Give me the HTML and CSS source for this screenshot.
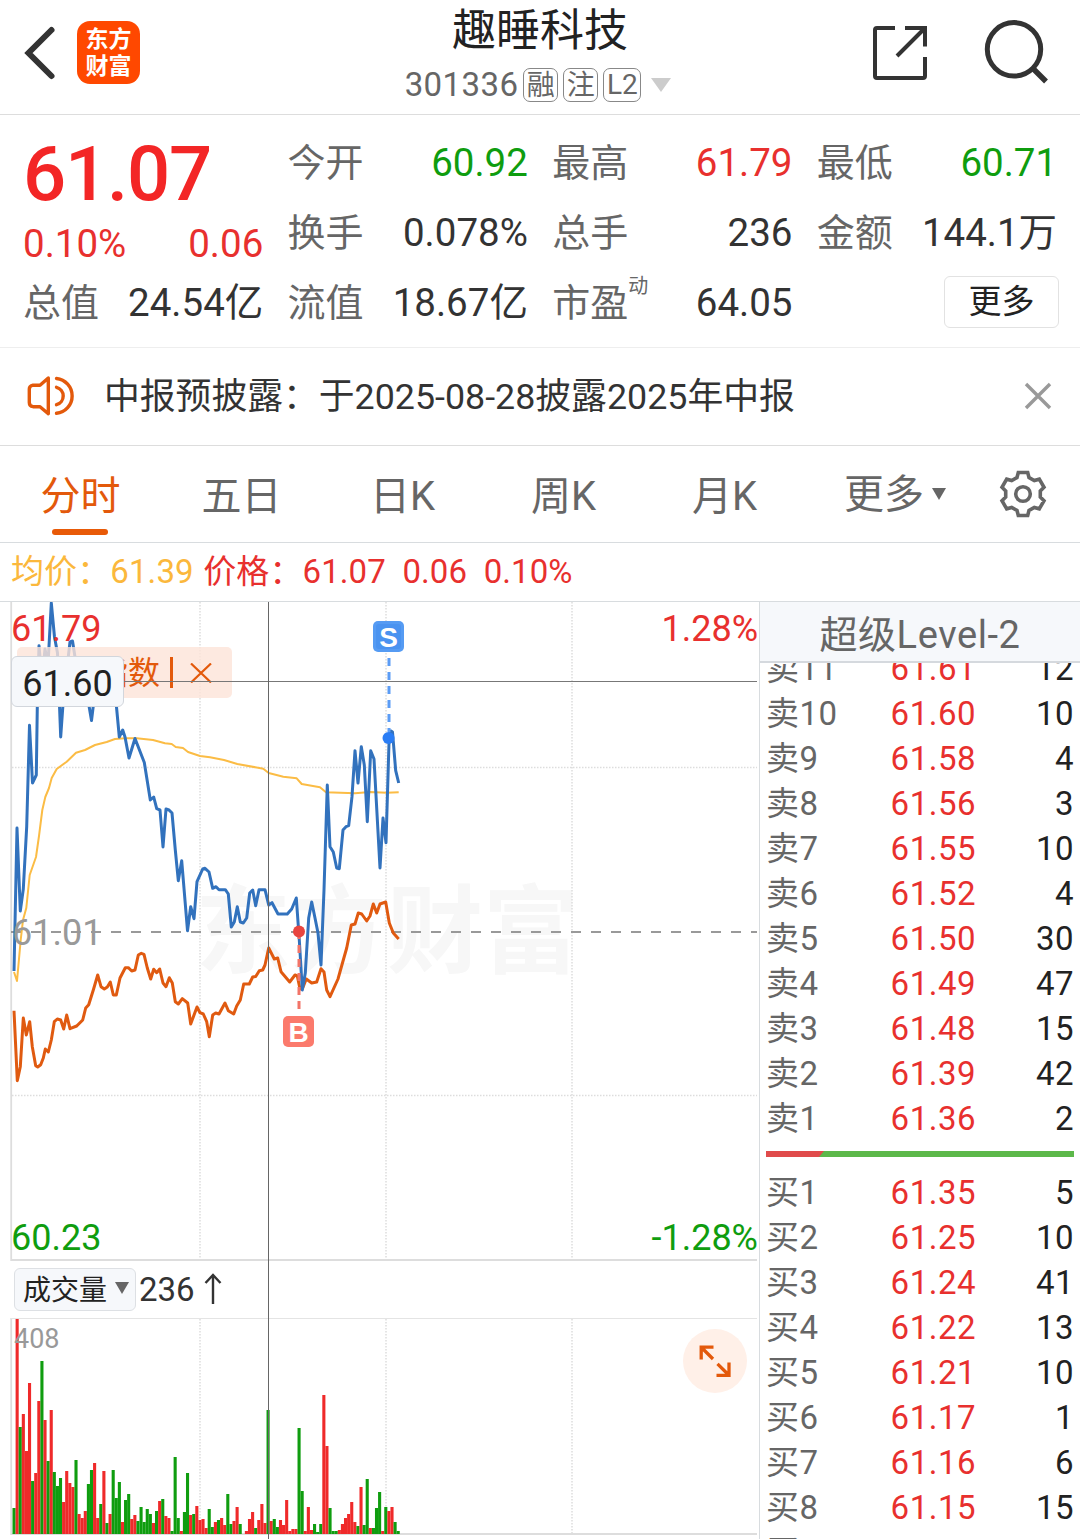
FILE: index.html
```html
<!DOCTYPE html>
<html lang="zh-CN">
<head>
    <meta charset="UTF-8">
    <meta name="viewport" content="width=device-width, initial-scale=1.0">
    <title>趣睡科技 301336</title>
    <link rel="stylesheet" href="styles.css">
</head>
<body>
    <!-- Header -->
    <header class="top-bar">
        <div class="top-left">
            <svg class="back-icon" width="36" height="56" viewBox="0 0 36 56">
                <path d="M31.5 5 L8.5 28 L31.5 51" fill="none" stroke="#333" stroke-width="6" stroke-linecap="round"/>
            </svg>
            <div class="app-logo"><span>东方</span><span>财富</span></div>
        </div>
        <div class="stock-title">
            <h1>趣睡科技</h1>
            <div class="stock-code">
                <span class="code">301336</span>
                <span class="tag">融</span>
                <span class="tag">注</span>
                <span class="tag tag-l2">L2</span>
                <svg class="code-arrow" width="20" height="14" viewBox="0 0 20 14"><path d="M0 0H20L10 14Z" fill="#ccc"/></svg>
            </div>
        </div>
        <div class="top-right">
            <svg width="56" height="56" viewBox="0 0 56 56" fill="none" stroke="#333" stroke-width="4">
                <path d="M23 3H5Q3 3 3 5V51Q3 53 5 53H51Q53 53 53 51V32"/>
                <path d="M33 3H53V21.5M52 4L25 31"/>
            </svg>
            <svg width="66" height="66" viewBox="0 0 66 66" fill="none" stroke="#333">
                <circle cx="31" cy="31.3" r="26.7" stroke-width="5"/>
                <path d="M50 50.5L63 63.5" stroke-width="5.5"/>
            </svg>
        </div>
    </header>

    <!-- Quote -->
    <section class="quote">
        <div class="price-col">
            <div class="price">61.07</div>
            <div class="change"><span>0.10%</span><span>0.06</span></div>
            <div class="stat"><label>总值</label><b>24.54亿</b></div>
        </div>
        <div class="stat-col">
            <div class="stat"><label>今开</label><b class="green">60.92</b></div>
            <div class="stat"><label>换手</label><b>0.078%</b></div>
            <div class="stat"><label>流值</label><b>18.67亿</b></div>
        </div>
        <div class="stat-col">
            <div class="stat"><label>最高</label><b class="red">61.79</b></div>
            <div class="stat"><label>总手</label><b>236</b></div>
            <div class="stat"><label>市盈<sup>动</sup></label><b>64.05</b></div>
        </div>
        <div class="stat-col">
            <div class="stat"><label>最低</label><b class="green">60.71</b></div>
            <div class="stat"><label>金额</label><b>144.1万</b></div>
            <div class="stat more-row"><button class="more-btn">更多</button></div>
        </div>
    </section>

    <!-- Notice -->
    <section class="notice">
        <svg width="50" height="42" viewBox="0 0 50 42" fill="none" stroke="#e3590b" stroke-width="3.4" stroke-linecap="round" stroke-linejoin="round">
            <path d="M22.3 3L14 10.2H7Q3.3 11 3.3 14V27.5Q3.3 31 7 31.7H14L22.3 38.7Z"/>
            <path d="M30.5 3.5A17.500 17.500 0 0 1 30.5 38.3M30.5 12.3A9 9 0 0 1 30.5 29.7"/>
        </svg>
        <p>中报预披露：于2025-08-28披露2025年中报</p>
        <svg class="close" width="28" height="28" viewBox="0 0 28 28"><path d="M2 2L26 26M26 2L2 26" stroke="#999" stroke-width="3.4"/></svg>
    </section>

    <!-- Tabs -->
    <nav class="tabs">
        <a class="tab active">分时</a>
        <a class="tab">五日</a>
        <a class="tab">日K</a>
        <a class="tab">周K</a>
        <a class="tab">月K</a>
        <a class="tab tab-more">更多<svg width="14" height="12" viewBox="0 0 14 12"><path d="M0 0H14L7 12Z" fill="#666"/></svg></a>
        <svg class="gear" width="50" height="50" viewBox="-25 -25 50 50" fill="none" stroke="#666" stroke-width="3.6">
            <path d="M-6 -16.5L-4.7 -21.5H4.7L6 -16.5L11.3 -13.4L16.3 -14.8L21 -6.7L17.3 -3V3L21 6.7L16.3 14.8L11.3 13.4L6 16.5L4.7 21.5H-4.7L-6 16.5L-11.3 13.4L-16.3 14.8L-21 6.7L-17.3 3V-3L-21 -6.7L-16.3 -14.8L-11.3 -13.4Z"/>
            <circle r="7.3"/>
        </svg>
    </nav>

    <div class="legend">
        <span class="avg">均价：61.39</span>
        <span>价格：61.07</span>
        <span class="diff">0.06</span>
        <span class="diff">0.10%</span>
    </div>

    <div class="main">
        <!-- Charts -->
        <div class="chart-pane">
            <svg class="price-chart" width="759" height="659" viewBox="0 602 759 659">
                <text class="watermark" x="195" y="965">东方财富</text>
                <g class="grid">
                    <path d="M200 602V1260M386 602V1260M572 602V1260M12 767.5H757M12 1095.5H757"/>
                </g>
                <path class="frame" d="M11.2 602V1260H757"/>
                <path class="mid-line" d="M11 932H757"/>
                <polyline class="line avg-line" points="14,972 17,981 20.7,940 23,920 26.3,908 29.7,875 36,857 39,836 42.3,810 45.3,797 49,788 51.7,778 56.7,769 66.7,761.7 76,752.7 85,750 95,745 106.7,742 115,739 125,738.3 136.7,738.3 153,740 165,743.3 171.7,744 175.7,747 183,748 188,752 200,756 210,757.3 224,760 237.3,764 263.3,768.7 268.7,773 283.3,776.7 296.7,778.3 301.7,784 320,787.3 326,792.3 355,793.3 370,792 386.7,792.7 398.7,792.3"/>
                <polyline class="line index-line" points="14,1010.7 17.3,1080.7 20.3,1066.7 23.3,1018 26.3,1035 29.7,1021.7 32.3,1046.7 35.7,1065.7 37.7,1067 40.7,1064.7 43.3,1058 45.3,1049 48.3,1052 51.3,1040 54.3,1021.7 57.3,1019 60.7,1020 63.7,1029 66.7,1015 70,1028.7 76.7,1026 82.7,1020 85.7,1008 88.7,1004.7 93.3,990 97.7,975 101,986.7 104.3,989 107.3,987 110.3,982 113.3,995 116.3,995 120,978 125.3,967.7 128.3,967.7 131.7,971 135,970 138.3,955 141.3,953.3 144,954.3 147.3,968 150.7,979 153.7,969.3 156.7,972.7 159.7,969 163,983 166,986.7 169.3,977.7 172.3,983 175.3,1001.7 178.3,1004 182.3,998.7 187.7,1003 190.7,1024 197,1007 200,1012.7 203.3,1014 206.7,1021.7 209.3,1036.7 212.7,1015 215.7,1013 219,1014 225,1003 228.3,1010.7 233.7,1014 236.7,1006 240.3,1000 243.7,984 249.3,984 252.7,977 255.7,976.5 259.3,970.7 262.7,970 265,965 268.7,948 274.3,959 277.7,958 281,971.7 289.7,982 295,975 297.3,976 300,989 302.7,988 306.3,979 311.7,983 316.7,982 321,968.7 324,972 326.7,990 330,996.7 338,979 343.3,960 346.7,948 351.3,925 355,924 358.3,913 361.7,914 366.7,921 370,916 373.3,904 376.7,913 380,904 385.7,902 389.3,923 393.3,933 398.7,939"/>
                <polyline class="line price-line" points="14,971 17,828 20.3,911 23.3,889 26.7,826.7 29.5,725.3 32.5,783 36.3,775 37.3,707 39,645.7 42,680 45,649 48,665 51.3,603 54.5,637 57.5,653 60.7,737 64,690 68.5,655 70,642 72.5,641 75,657 79,680 88,700 91.5,720.5 94,700 100,690 115,690 116.5,707 119.3,737 122.7,730 125,737 129,758 135,738.5 144.3,762.5 150.3,800 153.7,797 156.7,808.7 160,810 163,847 166,809 169,810 172,813 175.3,850 178.3,880.7 181.7,860.7 187.5,930.7 190.7,906.7 194,918.7 197,881.7 202.7,869 205,868.3 209,872 212.7,888.3 216,886.7 219,889.7 225.3,889.7 228.3,894 231.3,927 234.3,922 237.3,906.7 240.3,922 243.3,923 246.7,918 249.7,893 252.7,890 255.7,905.7 259,889.7 265,889.7 268.7,905 272,902.7 278,914 287.3,914 291.7,909 296.3,898 299.3,940 302.3,990 305.3,973 308.7,918 311.7,902 315,918 318,933 321,965 324,890 327.3,785 330,846.7 333.3,852 336.7,868 339.3,868.7 343,830 346,826.7 348.7,825.7 352,796.7 355,750.7 358,783 361.3,746.7 364.3,765 367.3,821.7 370.7,750.7 374,759 380,868 383,818 386,842.7 389,743 391,731 392.5,732 395.7,770.7 398.7,783"/>
                <!-- sell / buy marks -->
                <g class="mark-sell">
                    <path d="M389 658V732"/>
                    <circle cx="388.5" cy="738" r="6"/>
                    <rect x="373" y="621" width="31" height="31" rx="5"/>
                    <rect class="mark-inner" x="376" y="624" width="25" height="25" rx="3"/>
                    <text x="388.5" y="646.5">S</text>
                </g>
                <g class="mark-buy">
                    <path d="M299 931V1012"/>
                    <circle cx="299" cy="931.5" r="6"/>
                    <rect x="283" y="1016" width="31" height="31" rx="5"/>
                    <text x="298.5" y="1041.5">B</text>
                </g>
                <text class="axis up" x="11" y="641">61.79</text>
                <text class="axis up end" x="758" y="641">1.28%</text>
                <text class="axis flat" x="12" y="945">61.01</text>
                <text class="axis down" x="11" y="1250">60.23</text>
                <text class="axis down end" x="758" y="1250">-1.28%</text>
            </svg>

            <div class="index-chip">
                <span>指数</span>
                <i></i>
                <svg width="22" height="20" viewBox="0 0 22 20"><path d="M1 0.5L21 19.5M21 0.5L1 19.5" stroke="#e3590b" stroke-width="2.2"/></svg>
            </div>
            <div class="cross-x"></div>
            <div class="cross-price">61.60</div>

            <div class="volume-bar">
                <button class="volume-select">成交量<svg width="14" height="12" viewBox="0 0 14 12"><path d="M0 0H14L7 12Z" fill="#666"/></svg></button>
                <span>236</span>
                <svg width="18" height="32" viewBox="0 0 18 32"><path d="M9 31V2M1.5 10L9 2L16.5 10" fill="none" stroke="#333" stroke-width="2.4"/></svg>
            </div>

            <svg class="volume-chart" width="759" height="221" viewBox="0 1318 759 221">
                <g class="grid">
                    <path d="M200 1319V1533M386 1319V1533M572 1319V1533"/>
                </g>
                <path class="frame" d="M11.2 1318V1534H757"/>
                <path class="frame thin" d="M11 1318.5H757"/>
                <g id="bars"></g>
                <text class="vol-max" x="14" y="1348">408</text>
            </svg>
            <div class="cross-y"></div>

            <div class="expand-btn">
                <svg width="32" height="32" viewBox="0 0 32 32" fill="none" stroke="#e3590b" stroke-width="3.3">
                    <path d="M14.5 2.2H2.2V14.5M2.5 2.5L14 14M17.5 30.3H30V17.5M29.7 30L18.5 18.8"/>
                </svg>
            </div>
        </div>

        <!-- Order book -->
        <div class="book">
            <div class="book-title">超级Level-2</div>
            <div class="book-list">
                <div class="side" id="asks"></div>
                <div class="ratio"><i></i></div>
                <div class="side" id="bids"></div>
            </div>
        </div>
    </div>

    <script src="script.js"></script>
</body>
</html>
```
FILE: styles.css
```css
* {
    box-sizing: border-box;
}
body {
    margin: 0;
    width: 1080px;
    height: 1539px;
    overflow: hidden;
    background: #fff;
    color: #333;
    font-family: Roboto, "Noto Sans CJK SC", sans-serif;
}
svg {
    display: block;
    flex: none;
}
button {
    font-family: inherit;
    padding: 0;
    color: #222;
}
.red { color: #e8302e; }
.green { color: #0f9d0f; }

/* header */
.top-bar {
    display: flex;
    justify-content: space-between;
    height: 115px;
    border-bottom: 1px solid #ddd;
}
.top-left {
    display: flex;
    width: 330px;
    padding: 21px 0 0 20px;
}
.back-icon {
    margin-top: 3.5px;
}
.app-logo {
    display: flex;
    flex-direction: column;
    justify-content: center;
    align-items: center;
    width: 63px;
    height: 63px;
    margin-left: 21px;
    border-radius: 13px;
    background: #ff4800;
    color: #fff;
    font-size: 23px;
    font-weight: 700;
    line-height: 27px;
}
.stock-title {
    width: 300px;
    text-align: center;
}
.stock-title h1 {
    margin: 0;
    font-size: 44px;
    font-weight: 400;
    line-height: 62px;
    color: #222;
}
.stock-code {
    display: flex;
    align-items: center;
    justify-content: center;
    height: 45px;
    margin-right: 4px;
    color: #666;
}
.code {
    font-size: 33px;
    letter-spacing: 0.4px;
}
.tag {
    width: 35px;
    height: 34px;
    margin-left: 5px;
    border: 1.5px solid #888;
    border-radius: 7px;
    font-size: 28px;
    line-height: 34px;
}
.tag-l2 {
    width: 38px;
    line-height: 32px;
}
.code-arrow {
    margin-left: 10px;
}
.top-right {
    display: flex;
    width: 330px;
    justify-content: flex-end;
    gap: 55px;
    padding: 18px 31px 0 0;
}
.top-right svg:first-child {
    margin-top: 7px;
}

/* quote */
.quote {
    display: flex;
    gap: 24.3px;
    height: 233px;
    padding: 13px 0 0 23px;
    border-bottom: 1px solid #eee;
}
.price-col, .stat-col {
    width: 240.3px;
    flex: none;
}
.price {
    height: 90px;
    font-size: 76px;
    font-weight: 500;
    line-height: 92px;
    letter-spacing: -1.2px;
    color: #f32626;
}
.change {
    display: flex;
    justify-content: space-between;
    height: 50px;
    font-size: 38.5px;
    line-height: 52px;
    color: #e8302e;
}
.stat {
    display: flex;
    justify-content: space-between;
    height: 70px;
    font-size: 38.5px;
    line-height: 70px;
    white-space: nowrap;
}
.stat label {
    font-size: 38px;
    color: #666;
}
.stat b {
    font-weight: 400;
}
.stat sup {
    font-size: 20px;
    line-height: 0;
    vertical-align: 23px;
}
.more-row {
    justify-content: flex-end;
    align-items: center;
}
.more-btn {
    width: 115px;
    height: 52px;
    margin: -2px -2px 0 0;
    border: 1.5px solid #e2e2e2;
    border-radius: 6px;
    background: #fff;
    font-size: 33px;
    line-height: 46px;
}

/* notice */
.notice {
    display: flex;
    align-items: center;
    height: 98px;
    padding: 0 28px 2px 26px;
    border-bottom: 1px solid #ddd;
}
.notice p {
    flex: 1;
    margin: -6px 0 0 28px;
    font-size: 35.8px;
}

/* tabs */
.tabs {
    display: flex;
    align-items: center;
    height: 97px;
    border-bottom: 1px solid #d8dcdf;
    font-size: 40px;
    color: #666;
}
.tab {
    position: relative;
    width: 161px;
    height: 96px;
    text-align: center;
    line-height: 101px;
}
.tab.active {
    color: #e3590b;
}
.tab.active::after {
    content: "";
    position: absolute;
    left: 52px;
    bottom: 7px;
    width: 56px;
    height: 6px;
    border-radius: 3px;
    background: #e85a08;
}
.tab-more {
    display: flex;
    align-items: center;
    justify-content: center;
    width: 180px;
    gap: 8px;
}
.gear {
    margin-left: 13px;
}

.legend {
    display: flex;
    height: 59px;
    padding-left: 11px;
    border-bottom: 1px solid #d8dcdf;
    font-size: 33px;
    line-height: 58px;
    letter-spacing: 0.1px;
    color: #e8302e;
}
.legend span {
    margin-right: 9.5px;
}
.legend .avg {
    color: #fbb83c;
}
.legend .diff {
    margin-left: 7px;
}

/* charts */
.main {
    display: flex;
    height: 937px;
}
.chart-pane {
    position: relative;
    width: 759px;
    height: 937px;
}
.watermark {
    font-size: 96px;
    font-weight: 700;
    fill: #f7f7f7;
}
.grid path {
    fill: none;
    stroke: #ddd;
    stroke-width: 1.5;
    stroke-dasharray: 1.5 1.5;
}
.frame {
    fill: none;
    stroke: #ddd;
    stroke-width: 1.8;
}
.frame.thin {
    stroke: #e4e4e4;
    stroke-width: 1;
}
.mid-line {
    stroke: #999;
    stroke-width: 2;
    stroke-dasharray: 10 10;
}
.line {
    fill: none;
    stroke-width: 3;
    stroke-linejoin: round;
}
.avg-line {
    stroke: #fbbc45;
    stroke-width: 2;
}
.index-line { stroke: #e05a10; }
.price-line { stroke: #3272bd; }
.mark-sell path, .mark-buy path {
    stroke-width: 3;
    stroke-dasharray: 8 6;
}
.mark-sell path { stroke: #5b9cf5; }
.mark-buy path { stroke: #f27468; }
.mark-sell circle { fill: #2a7df5; }
.mark-buy circle { fill: #e8453f; }
.mark-sell rect { fill: #559bf3; }
.mark-sell .mark-inner { fill: #4a93f0; }
.mark-buy rect { fill: #fb7a6c; }
.mark-sell text, .mark-buy text {
    fill: #fff;
    font-family: "Liberation Sans", Arial, sans-serif;
    font-size: 28px;
    font-weight: 700;
    text-anchor: middle;
}
.axis {
    font-size: 36px;
}
.axis.up { fill: #e8302e; }
.axis.down { fill: #0f9d0f; }
.axis.flat { fill: #999; }
.axis.end { text-anchor: end; }
.index-chip {
    position: absolute;
    left: 17px;
    top: 45px;
    display: flex;
    align-items: center;
    justify-content: flex-end;
    width: 215px;
    height: 51px;
    padding-right: 20px;
    border-radius: 5px;
    background: rgba(253, 228, 216, 0.8);
    color: #e3590b;
    font-size: 32px;
}
.index-chip span {
    margin-top: -5px;
}
.index-chip i {
    width: 3px;
    height: 31px;
    margin: 0 17px 0 10px;
    background: #e3590b;
}
.cross-x {
    position: absolute;
    left: 11px;
    top: 79px;
    width: 746px;
    height: 1px;
    background: #777;
}
.cross-y {
    position: absolute;
    left: 268px;
    top: 0;
    width: 1px;
    height: 937px;
    background: #666;
}
.cross-price {
    position: absolute;
    left: 11px;
    top: 54px;
    width: 113px;
    height: 51px;
    border: 1px solid #d2d6dc;
    border-radius: 6px;
    background: #f6f8fb;
    color: #222;
    font-size: 36px;
    line-height: 54px;
    text-align: center;
}
.volume-bar {
    display: flex;
    align-items: center;
    height: 57px;
    padding: 0 0 1px 14px;
    font-size: 33px;
}
.volume-bar span {
    margin: 0 9px 0 3px;
}
.volume-select {
    display: flex;
    align-items: center;
    gap: 8px;
    width: 122px;
    height: 43px;
    padding: 0 0 3px 8px;
    border: 1px solid #dde0e4;
    border-radius: 6px;
    background: #f6f8fb;
    font-size: 28px;
}
.bar-up { fill: #ef2a2a; }
.bar-down { fill: #0f9d0f; }
.vol-max {
    font-size: 27px;
    fill: #999;
}
.expand-btn {
    position: absolute;
    left: 683px;
    top: 727px;
    display: flex;
    align-items: center;
    justify-content: center;
    width: 64px;
    height: 64px;
    border-radius: 50%;
    background: #fff0e8;
}

/* order book */
.book {
    width: 321px;
    border-left: 1px solid #d8dcdf;
}
.book-title {
    height: 61px;
    border-bottom: 2px solid #d5d9de;
    background: #f6f8fb;
    color: #666;
    font-size: 38px;
    line-height: 67px;
    letter-spacing: 0.6px;
    text-align: center;
}
.book-list {
    display: flex;
    flex-direction: column;
    height: 876px;
    overflow: hidden;
    padding: 0 6px;
}
.side {
    flex: none;
}
#asks {
    margin-top: -17px;
}
.level {
    display: grid;
    grid-template-columns: 90px 120px 1fr;
    height: 45px;
    font-size: 33px;
    line-height: 45px;
    letter-spacing: 0.5px;
    text-align: right;
}
.level .name {
    color: #666;
    text-align: left;
}
.level .num {
    color: #e8302e;
}
.level .qty {
    color: #222;
}
.ratio {
    flex: none;
    height: 6px;
    margin: 10px 0 13px;
    background: #5cb84a;
}
.ratio i {
    display: block;
    width: 58px;
    height: 6px;
    background: #e04b4b;
    clip-path: polygon(0 0, 100% 0, 53px 100%, 0 100%);
}
```
FILE: script.js
```javascript
// ask / bid levels: [price, quantity]
const asks = [
    ['61.61', 12], ['61.60', 10], ['61.58', 4], ['61.56', 3], ['61.55', 10], ['61.52', 4],
    ['61.50', 30], ['61.49', 47], ['61.48', 15], ['61.39', 42], ['61.36', 2]
];
const bids = [
    ['61.35', 5], ['61.25', 10], ['61.24', 41], ['61.22', 13], ['61.21', 10],
    ['61.17', 1], ['61.16', 6], ['61.15', 15], ['61.14', 3]
];

function levelRow(name, level) {
    return `
        <div class="level">
            <span class="name">${name}</span>
            <span class="num">${level[0]}</span>
            <span class="qty">${level[1]}</span>
        </div>
    `;
}

document.getElementById('asks').innerHTML = asks.map((l, i) => levelRow('卖' + (asks.length - i), l)).join('');
document.getElementById('bids').innerHTML = bids.map((l, i) => levelRow('买' + (i + 1), l)).join('');

// volume per minute, r = up, g = down
const volumes = `g26 r215 g107 r120 r83 r151 g53 r61 r133 g173 r114 g73 r124 g62 g48 g56 r32 r63 r51 r47
g74 r20 r16 r23 g50 g64 r71 r16 g30 r63 g11 r20 g64 g36 g52 r12 g34 g40 r15 r19
g13 g27 g12 g25 g20 r11 g23 r33 g35 r18 r16 g3 g77 g16 r3 g22 g61 r19 g20 r28
r14 r15 r6 g25 g7 r12 g14 r16 r9 g40 g10 r13 r27 g10 g0 r3 r15 r22 g6 r14
r30 r11 g124 r13 g15 g7 r14 r9 r34 r3 r5 r5 g106 g43 r3 r27 r4 g10 g2 g10
r139 r88 g26 g3 g3 r4 r10 r16 r20 r32 r12 g8 r47 g9 g55 r6 g6 g26 g42 r3
g27 r23 r27 g12 g3`.split(/\s+/);

document.getElementById('bars').innerHTML = volumes.map((v, i) => {
    const h = Number(v.slice(1));
    const x = (12.5 + i * 3.098).toFixed(2);
    return `<rect class="${v[0] === 'r' ? 'bar-up' : 'bar-down'}" x="${x}" y="${1534 - h}" width="3.1" height="${h}"/>`;
}).join('');
```
